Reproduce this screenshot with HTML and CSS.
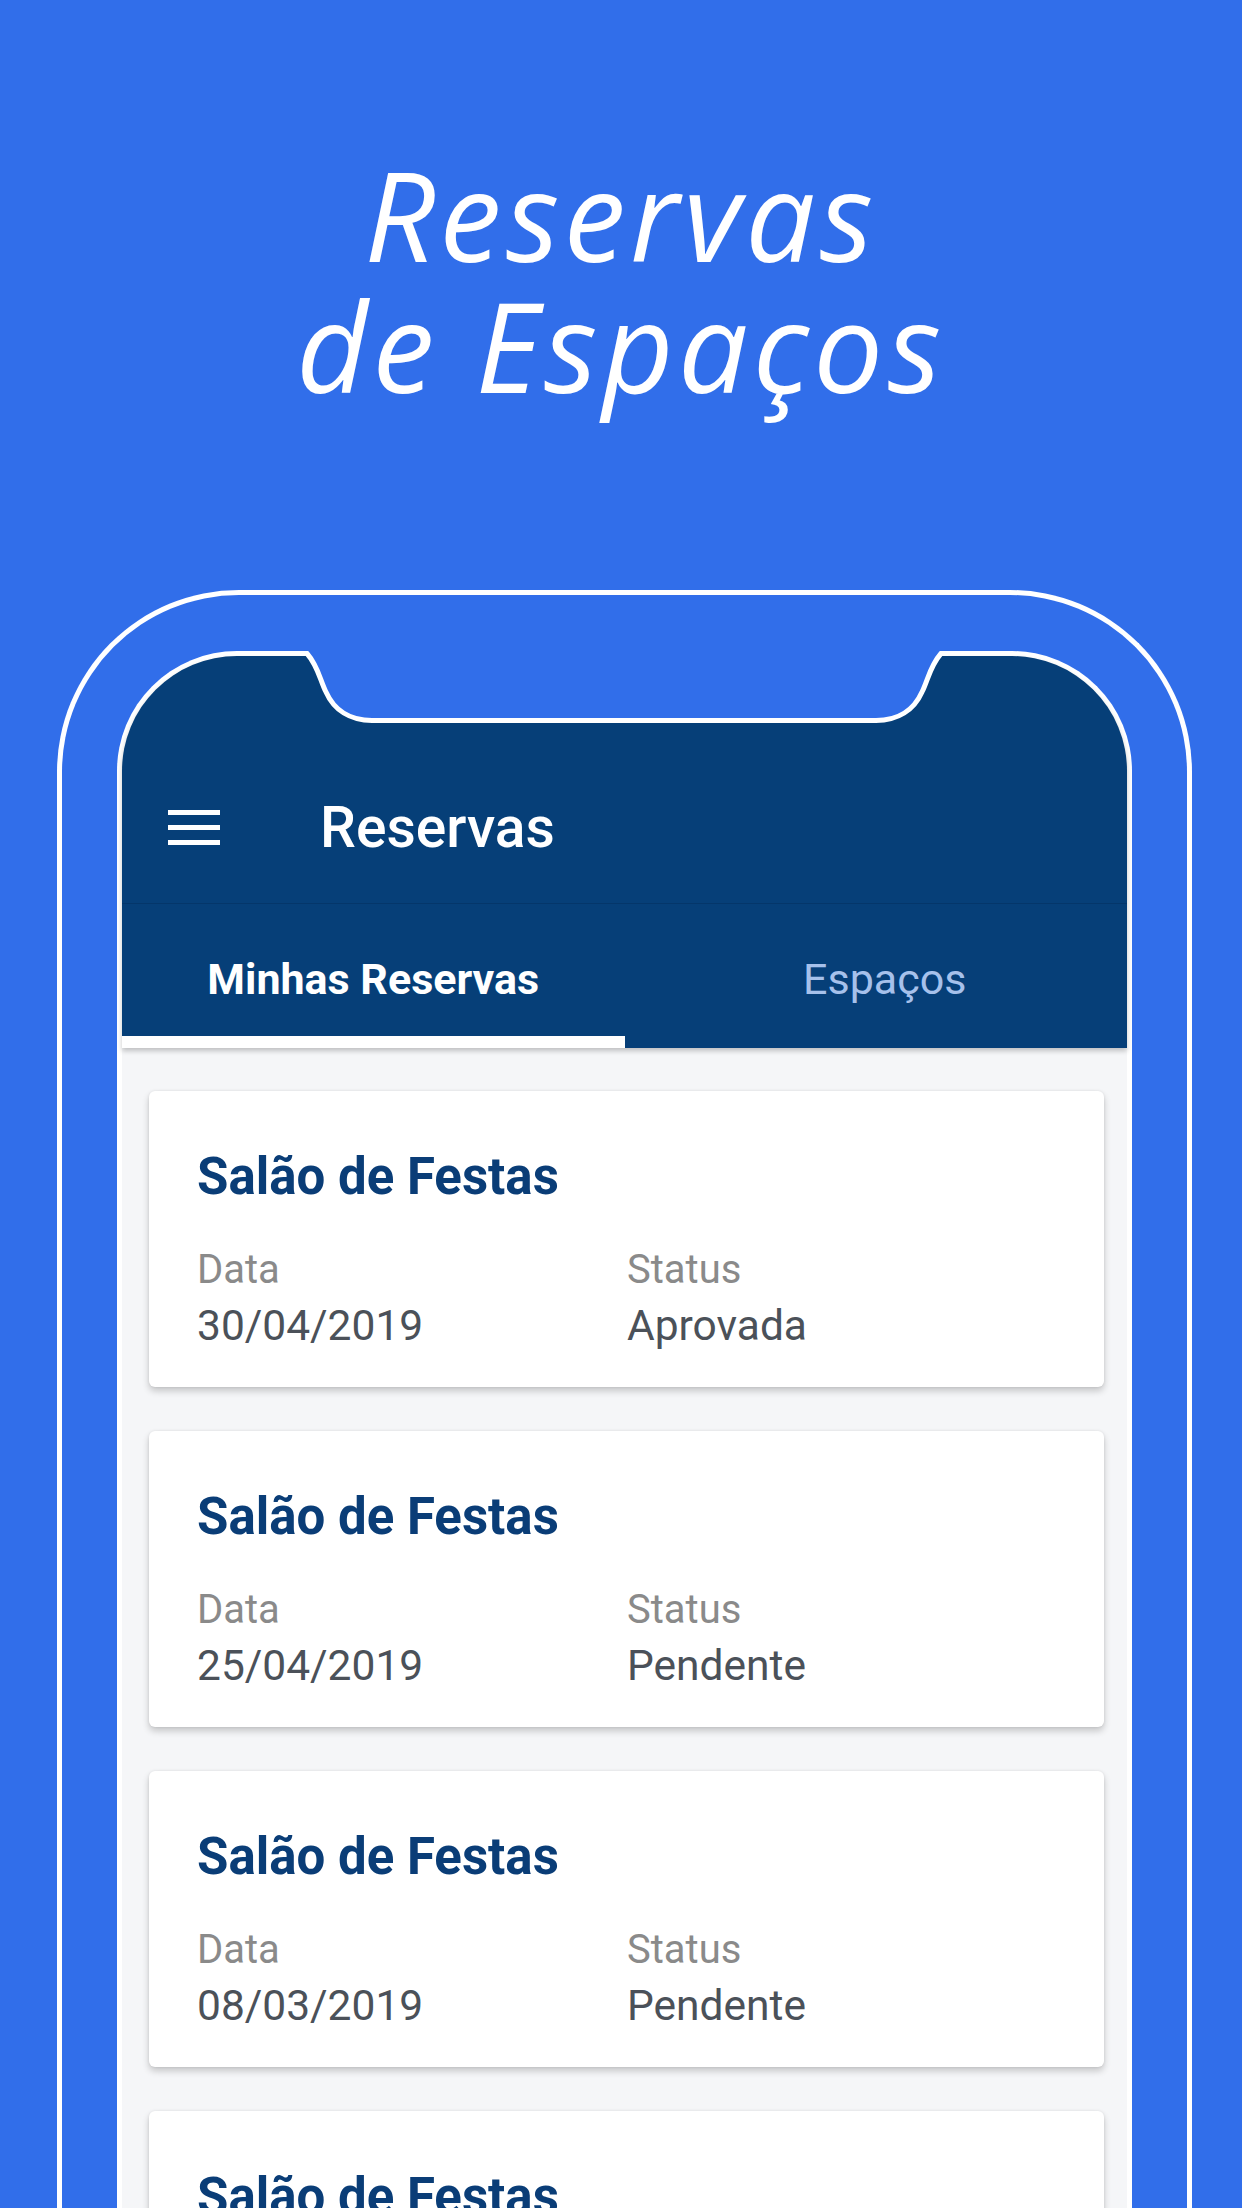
FILE: index.html
```html
<!DOCTYPE html>
<html lang="pt-BR">
<head>
    <meta charset="UTF-8">
    <meta name="viewport" content="width=device-width, initial-scale=1.0">
    <title>Reservas de Espaços</title>
    <link rel="stylesheet" href="styles.css">
</head>
<body>

    <h1 class="headline">Reservas<br>de Espaços</h1>

    <div class="phone">
        <div class="screen">
            <!-- notch cut-out drawn over the top border of the screen -->
            <svg class="notch" viewBox="300 645 648 82" width="648" height="82">
                <path class="notch-fill" d="M307 640 L307 653.5 C318 666 320 680 326 692 C334 710 350 720.5 372 720.5 L876 720.5 C898 720.5 914 710 922 692 C928 680 930 666 941 653.5 L941 640 Z"/>
                <path class="notch-line" d="M296 653.5 L307 653.5 C318 666 320 680 326 692 C334 710 350 720.5 372 720.5 L876 720.5 C898 720.5 914 710 922 692 C928 680 930 666 941 653.5 L952 653.5"/>
            </svg>

            <header class="appbar">
                <div class="toolbar">
                    <svg class="menu" width="52" height="35" viewBox="0 0 52 35">
                        <rect x="0" y="0" width="52" height="5"/>
                        <rect x="0" y="15" width="52" height="5"/>
                        <rect x="0" y="30" width="52" height="5"/>
                    </svg>
                    <h2 class="toolbar-title">Reservas</h2>
                </div>
                <nav class="tabs">
                    <a class="tab active">Minhas Reservas</a>
                    <a class="tab">Espaços</a>
                </nav>
            </header>

            <main class="list">
                <div class="card">
                    <h3 class="card-title">Salão de Festas</h3>
                    <div class="card-info">
                        <span class="label">Data</span>
                        <span class="label">Status</span>
                        <span class="value">30/04/2019</span>
                        <span class="value">Aprovada</span>
                    </div>
                </div>
                <div class="card">
                    <h3 class="card-title">Salão de Festas</h3>
                    <div class="card-info">
                        <span class="label">Data</span>
                        <span class="label">Status</span>
                        <span class="value">25/04/2019</span>
                        <span class="value">Pendente</span>
                    </div>
                </div>
                <div class="card">
                    <h3 class="card-title">Salão de Festas</h3>
                    <div class="card-info">
                        <span class="label">Data</span>
                        <span class="label">Status</span>
                        <span class="value">08/03/2019</span>
                        <span class="value">Pendente</span>
                    </div>
                </div>
                <div class="card">
                    <h3 class="card-title">Salão de Festas</h3>
                    <div class="card-info">
                        <span class="label">Data</span>
                        <span class="label">Status</span>
                        <span class="value">01/03/2019</span>
                        <span class="value">Aprovada</span>
                    </div>
                </div>
            </main>
        </div>
    </div>

</body>
</html>
```

FILE: styles.css
```css
html, body {
    margin: 0;
    height: 2208px;
    overflow: hidden;
}

body {
    font-family: Roboto, "Liberation Sans", sans-serif;
    background-color: #316eea;
}

.headline {
    margin: 0;
    padding-top: 148px;
    font-family: "Open Sans", "Liberation Sans", sans-serif;
    font-style: italic;
    font-weight: 400;
    font-size: 124px;
    line-height: 131px;
    color: #fff;
    text-align: center;
    letter-spacing: 4.5px;
}

.phone {
    width: 1135px;
    margin: 180px 0 0 57px;
    box-sizing: border-box;
    padding: 56px 55px 0 55px;
    border: 5px solid #fff;
    border-bottom: none;
    border-radius: 182px 182px 0 0;
}

.screen {
    position: relative;
    border: 5px solid #fff;
    border-bottom: none;
    border-radius: 120px 120px 0 0;
    background-color: #f5f6f8;
}

.notch {
    position: absolute;
    left: 178px;
    top: -11px;
    z-index: 2;
}

.notch-fill {
    fill: #316eea;
}

.notch-line {
    fill: none;
    stroke: #fff;
    stroke-width: 5;
}

.appbar {
    position: relative;
    z-index: 1;
    background-color: #063f78;
    border-radius: 115px 115px 0 0;
    box-shadow: 0 3px 5px rgba(0, 0, 0, 0.22);
}

.toolbar {
    display: flex;
    align-items: center;
    height: 248px;
    box-sizing: border-box;
    padding: 96px 0 0 46px;
    border-bottom: 1px solid #04366a;
}

.menu {
    fill: #fff;
    margin-right: 100px;
}

.toolbar-title {
    margin: 0;
    font-size: 57px;
    font-weight: 500;
    line-height: 1;
    color: #fff;
}

.tabs {
    display: flex;
    height: 144px;
}

.tab {
    width: 50%;
    box-sizing: border-box;
    display: flex;
    align-items: center;
    justify-content: center;
    padding-top: 18px;
    border-bottom: 12px solid transparent;
    font-size: 43px;
    color: #a6c1eb;
}

.tab.active {
    font-weight: 700;
    color: #fff;
    border-bottom-color: #fff;
}

.tab + .tab {
    padding-left: 18px;
}

.list {
    padding: 43px 23px 0 27px;
}

.card {
    height: 296px;
    box-sizing: border-box;
    margin-bottom: 44px;
    padding: 60px 0 0 48px;
    background-color: #fff;
    border-radius: 6px;
    box-shadow: 0 4px 7px rgba(0, 0, 0, 0.2), 0 0 3px rgba(0, 0, 0, 0.08);
}

.card-title {
    margin: 0;
    font-size: 51px;
    font-weight: 700;
    line-height: 1;
    color: #0a3d77;
}

.card-info {
    display: grid;
    grid-template-columns: 430px 1fr;
    margin-top: 48px;
}

.label {
    font-size: 40px;
    line-height: 1;
    color: #8a8a8a;
    margin-bottom: 15px;
}

.value {
    font-size: 42.5px;
    line-height: 1;
    color: #4b5159;
}
```
